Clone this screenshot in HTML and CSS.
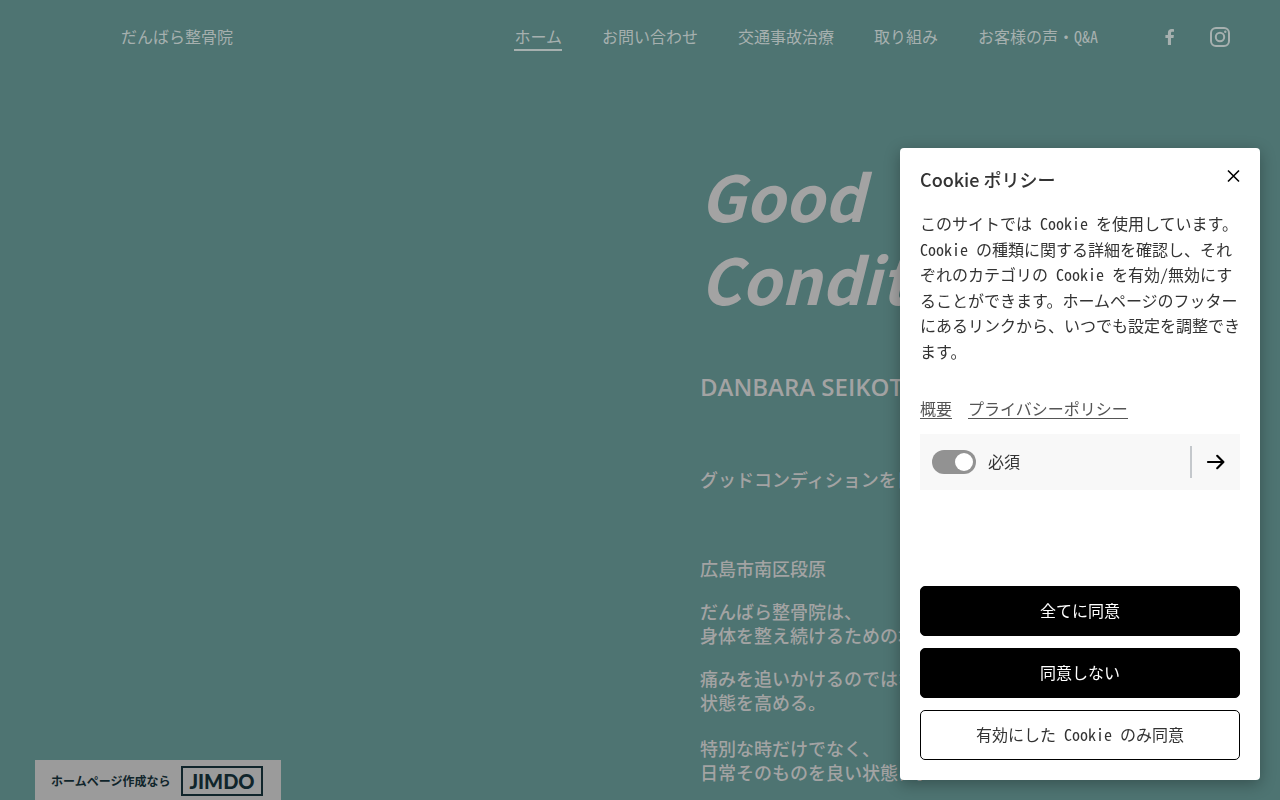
FILE: index.html
```html
<!DOCTYPE html>
<html lang="ja">
<head>
<meta charset="utf-8">
<meta name="viewport" content="width=device-width, initial-scale=1">
<title>だんばら整骨院</title>
<link rel="stylesheet" href="styles.css">
</head>
<body>
<header class="header">
  <a class="brand" href="#">だんばら整骨院</a>
  <nav class="nav" aria-label="メイン">
    <a class="nav-link nav-link-active" href="#">ホーム</a>
    <a class="nav-link" href="#">お問い合わせ</a>
    <a class="nav-link" href="#">交通事故治療</a>
    <a class="nav-link" href="#">取り組み</a>
    <a class="nav-link" href="#">お客様の声・Q&amp;A</a>
  </nav>
  <div class="social">
    <a class="social-link" href="#" aria-label="Facebook">
      <svg width="30" height="30" viewBox="0 0 30 30" fill="currentColor"><path d="M12.9 23v-7.1h-2.5V12.9h2.5v-2c0-2.5 1.5-3.9 3.8-3.9 1 0 2 .1 2.3.2v2.6h-1.5c-1.2 0-1.5.6-1.5 1.4v1.7h2.9l-.4 3h-2.5V23z"/></svg>
    </a>
    <a class="social-link" href="#" aria-label="Instagram">
      <svg width="30" height="30" viewBox="0 0 30 30" fill="none" stroke="currentColor" stroke-width="2"><rect x="6" y="6" width="18" height="18" rx="5"/><circle cx="15" cy="15" r="4.2"/><circle cx="20.3" cy="9.8" r="1.2" fill="currentColor" stroke="none"/></svg>
    </a>
  </div>
</header>
<main class="hero">
  <div class="hero-copy">
    <h1 class="hero-title">Good<br>Condition</h1>
    <h2 class="hero-subtitle">DANBARA SEIKOTSUIN</h2>
    <p class="lead">グッドコンディションを日常に。</p>
    <div class="story">
      <p class="text">広島市南区段原</p>
      <p class="text">だんばら整骨院は、<br>身体を整え続けるための場所です。</p>
      <p class="text">痛みを追いかけるのではなく、<br>状態を高める。</p>
      <p class="text text-last">特別な時だけでなく、<br>日常そのものを良い状態に。</p>
    </div>
  </div>
</main>
<a class="badge" href="#">
  <span class="badge-text">ホームページ作成なら</span>
  <span class="badge-logo">JIMDO</span>
</a>
<section class="cookie" role="dialog" aria-labelledby="cookie-title">
  <div class="cookie-head">
    <h2 class="cookie-title" id="cookie-title">Cookie ポリシー</h2>
    <button class="close" type="button" aria-label="閉じる">
      <svg width="14" height="14" viewBox="0 0 14 14" fill="none" stroke="currentColor" stroke-width="1.6"><path d="M2 1.5l11 11M13 1.5L2 12.5"/></svg>
    </button>
  </div>
  <p class="cookie-text">このサイトでは Cookie を使用しています。Cookie の種類に関する詳細を確認し、それぞれのカテゴリの Cookie を有効/無効にすることができます。ホームページのフッターにあるリンクから、いつでも設定を調整できます。</p>
  <div class="cookie-links">
    <a class="cookie-link" href="#">概要</a>
    <a class="cookie-link" href="#">プライバシーポリシー</a>
  </div>
  <div class="option">
    <input class="switch" type="checkbox" id="required" checked disabled>
    <label class="option-label" for="required">必須</label>
    <button class="details" type="button" aria-label="必須の詳細">
      <svg width="20" height="18" viewBox="0 0 20 18" fill="none" stroke="currentColor" stroke-width="2.2" stroke-linecap="round" stroke-linejoin="round"><path d="M2 9h15M11.2 2.8L17.4 9l-6.2 6.2"/></svg>
    </button>
  </div>
  <div class="actions">
    <button class="button" type="button">全てに同意</button>
    <button class="button" type="button">同意しない</button>
    <button class="button button-outline" type="button">有効にした Cookie のみ同意</button>
  </div>
</section>
</body>
</html>
```
FILE: styles.css
```css
* {
  box-sizing: border-box;
}

body {
  margin: 0;
  height: 100vh;
  overflow: hidden;
  background: #4e7472;
  color: #a3a3a3;
  font: 16px/24px "Noto Sans CJK JP", sans-serif;
  font-feature-settings: "hwid";
}

h1, h2, p {
  margin: 0;
}

a {
  color: inherit;
  text-decoration: none;
}

button {
  font: inherit;
  font-feature-settings: inherit;
  color: inherit;
  cursor: pointer;
}

svg {
  display: block;
}

.header {
  display: flex;
  align-items: center;
  height: 74px;
  padding: 0 45px 0 121px;
  color: #a6b0af;
}

.brand {
  padding-bottom: 2px;
}

.nav {
  display: flex;
  gap: 40px;
  margin-left: auto;
}

.nav-link {
  padding: 1px 0;
  border-bottom: 2px solid transparent;
  white-space: nowrap;
}

.nav-link-active {
  border-bottom-color: #a6b0af;
}

.social {
  display: flex;
  gap: 20px;
  margin-left: 57px;
}

.hero {
  display: grid;
  grid-template-columns: 700px 1fr;
  padding-top: 79px;
}

.hero-copy {
  grid-column: 2;
}

.hero-title {
  font: italic 700 63px/83px "Noto Sans CJK JP", sans-serif;
  font-feature-settings: normal;
}

.hero-subtitle {
  margin-top: 52px;
  font: 600 24px/32px "Open Sans", sans-serif;
  white-space: nowrap;
}

.lead {
  margin-top: 64px;
  font-size: 18px;
  font-weight: 500;
  white-space: nowrap;
}

.story {
  margin-top: 65px;
}

.text {
  margin-bottom: 19px;
  font-size: 18px;
  font-weight: 500;
  white-space: nowrap;
}

.text-last {
  margin-top: 22px;
}

.badge {
  position: fixed;
  bottom: 0;
  left: 35px;
  display: flex;
  align-items: center;
  gap: 11px;
  height: 40px;
  padding: 2px 18px 0 16px;
  background: #9b9b9b;
  color: #10252b;
}

.badge-text {
  font-size: 12px;
  font-weight: 700;
}

.badge-logo {
  padding: 0 6px;
  border: 2px solid;
  font: 900 20px/26px Lato, sans-serif;
}

.cookie {
  position: fixed;
  right: 20px;
  bottom: 20px;
  display: flex;
  flex-direction: column;
  width: 360px;
  height: 632px;
  max-height: calc(100vh - 40px);
  padding: 19px 20px 20px;
  border-radius: 4px;
  background: #fff;
  color: #333;
  box-shadow: 0 4px 16px rgba(0, 0, 0, 0.3);
}

.cookie-head {
  display: flex;
  justify-content: space-between;
  align-items: flex-start;
}

.cookie-title {
  font-size: 18px;
  font-weight: 500;
  font-feature-settings: normal;
}

.close {
  padding: 2px 0;
  border: 0;
  background: none;
  color: #000;
}

.cookie-text {
  margin-top: 20px;
  line-height: 1.6;
}

.cookie-links {
  display: flex;
  gap: 16px;
  margin-top: 33px;
  color: #555;
}

.cookie-link {
  border-bottom: 1px solid;
  line-height: 20px;
}

.option {
  display: flex;
  align-items: center;
  height: 56px;
  margin-top: 15px;
  padding: 12px 0 12px 12px;
  background: #f8f8f8;
}

.option-label {
  padding-bottom: 2px;
}

.switch {
  appearance: none;
  display: flex;
  justify-content: flex-end;
  width: 44px;
  height: 24px;
  margin: 0 12px 0 0;
  padding: 3px;
  border-radius: 12px;
  background: #929292;
}

.switch::before {
  content: "";
  width: 18px;
  height: 18px;
  border-radius: 50%;
  background: #fff;
}

.details {
  height: 32px;
  margin-left: auto;
  padding: 0 14px;
  border: 0;
  border-left: 2px solid #c4c8cc;
  background: none;
  color: #000;
}

.actions {
  display: grid;
  gap: 12px;
  margin-top: auto;
}

.button {
  height: 50px;
  padding-bottom: 3px;
  border: 1px solid #000;
  border-radius: 5px;
  background: #000;
  color: #fff;
}

.button-outline {
  background: #fff;
  color: #333;
}
```
